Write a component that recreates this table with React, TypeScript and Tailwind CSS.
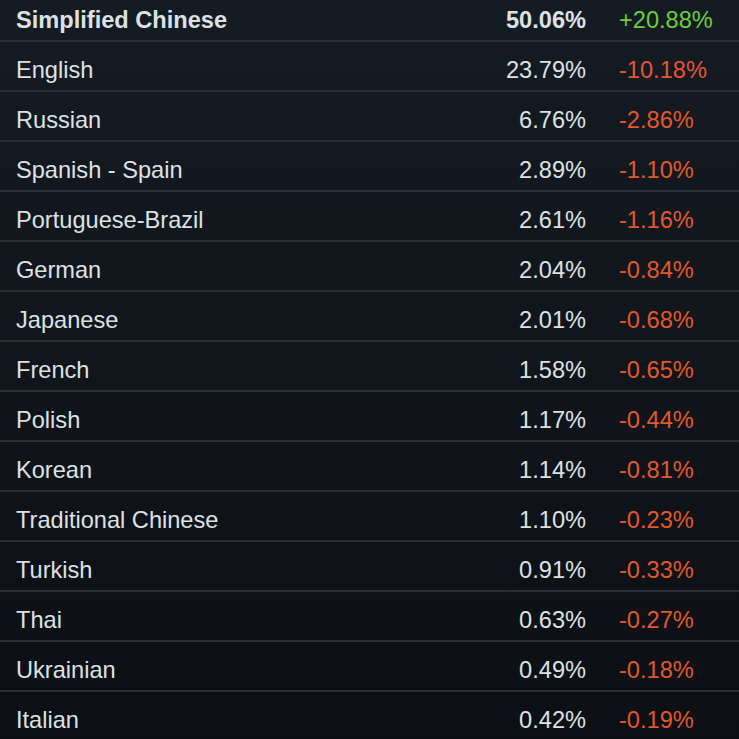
const rows = [
  { name: 'Simplified Chinese', share: '50.06%', change: '+20.88%' },
  { name: 'English', share: '23.79%', change: '-10.18%' },
  { name: 'Russian', share: '6.76%', change: '-2.86%' },
  { name: 'Spanish - Spain', share: '2.89%', change: '-1.10%' },
  { name: 'Portuguese-Brazil', share: '2.61%', change: '-1.16%' },
  { name: 'German', share: '2.04%', change: '-0.84%' },
  { name: 'Japanese', share: '2.01%', change: '-0.68%' },
  { name: 'French', share: '1.58%', change: '-0.65%' },
  { name: 'Polish', share: '1.17%', change: '-0.44%' },
  { name: 'Korean', share: '1.14%', change: '-0.81%' },
  { name: 'Traditional Chinese', share: '1.10%', change: '-0.23%' },
  { name: 'Turkish', share: '0.91%', change: '-0.33%' },
  { name: 'Thai', share: '0.63%', change: '-0.27%' },
  { name: 'Ukrainian', share: '0.49%', change: '-0.18%' },
  { name: 'Italian', share: '0.42%', change: '-0.19%' },
]

export default function App() {
  return (
    <div className="h-[739px] w-[739px] overflow-hidden bg-gradient-to-b from-[#151b23] to-[#0c0f14] font-['Liberation_Sans',Arial,sans-serif] text-[23.6px] text-[#dde1e4]">
      <div className="-mt-[8px]">
        {rows.map((row, i) => (
          <div
            key={row.name}
            className="flex h-[50px] items-center border-b-2 border-[#2a2f37] pl-[16px] pt-[9px]"
          >
            <span className={`flex-1 ${i === 0 ? 'font-bold' : ''}`}>{row.name}</span>
            <span className={`w-[140px] text-right ${i === 0 ? 'font-bold' : ''}`}>{row.share}</span>
            <span
              className={`ml-[33px] w-[120px] ${
                row.change.startsWith('+') ? 'text-[#6dcd38]' : 'text-[#e2582c]'
              }`}
            >
              {row.change}
            </span>
          </div>
        ))}
      </div>
    </div>
  )
}
